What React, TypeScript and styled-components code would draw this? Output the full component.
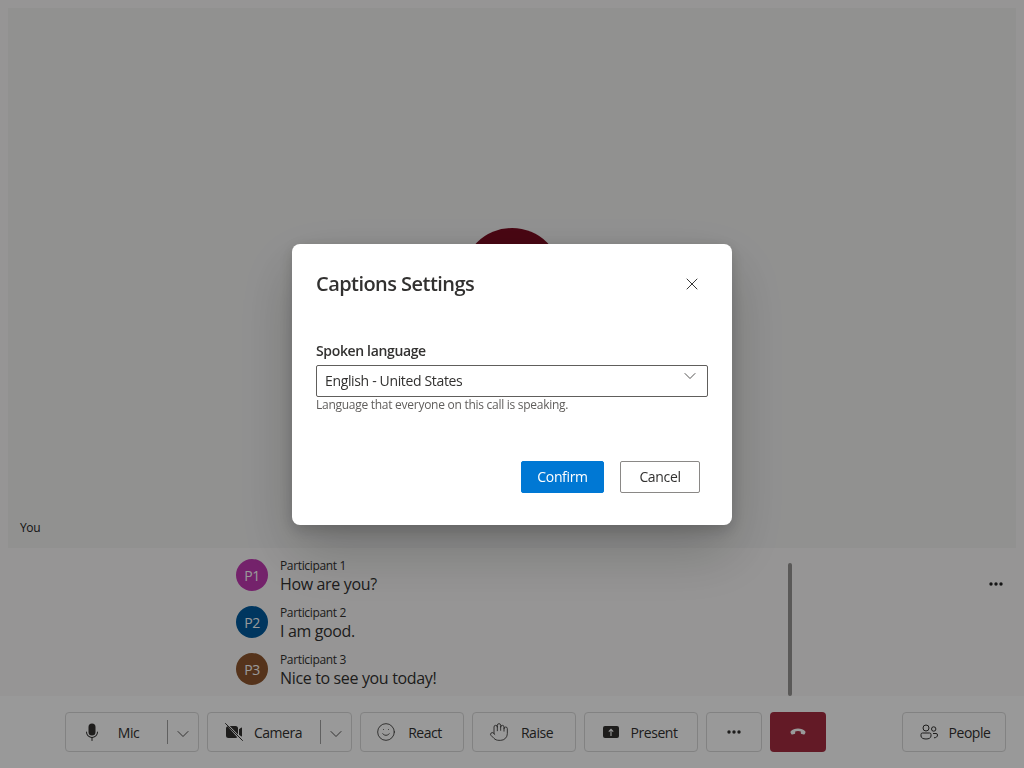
import { ReactNode } from 'react';
import { createGlobalStyle, styled } from 'styled-components';
import { ChevronDown, Hand, Smile, X } from 'lucide-react';

const GlobalStyle = createGlobalStyle`
  html, body {
    margin: 0;
    padding: 0;
    height: 100%;
    background: #fff;
  }

  body, button {
    font-family: "Open Sans", "Noto Sans", sans-serif;
    letter-spacing: -0.35px;
  }

  #root {
    height: 100%;
  }
`;

const MicIcon = () => (
  <svg width="20" height="20" viewBox="0 0 20 20" fill="currentColor">
    <path d="M10 1.500a3.500 3.500 0 0 0-3.500 3.500v5a3.500 3.500 0 0 0 7 0V5A3.500 3.500 0 0 0 10 1.500Z" />
    <path d="M4.500 9.500c.3 0 .5.2.5.5a5 5 0 0 0 10 0c0-.3.2-.5.5-.5s.5.2.5.5a6 6 0 0 1-5.500 6v2.500a.5.5 0 0 1-1 0V16A6 6 0 0 1 4 10c0-.3.2-.5.5-.5Z" />
  </svg>
);

const CameraOffIcon = () => (
  <svg width="20" height="20" viewBox="0 0 20 20" fill="currentColor">
    <path d="M3.600 4.200A2.400 2.400 0 0 0 2 6.500v7A2.500 2.500 0 0 0 4.500 16h7c.7 0 1.300-.3 1.800-.7L3.600 4.200Z" />
    <path d="M14 12.600V6.500A2.500 2.500 0 0 0 11.500 4H5.700L14 12.600Z" />
    <path d="M15 7.200l2.400-1.600c.3-.2.6 0 .6.4v8c0 .4-.3.6-.6.4L15 12.800V7.200Z" />
    <path d="M1.500 1.500l17 17" stroke="currentColor" strokeWidth="1" fill="none" strokeLinecap="round" />
  </svg>
);

const PresentIcon = () => (
  <svg width="16" height="12" viewBox="0 0 16 12">
    <rect width="16" height="12" rx="2" fill="currentColor" />
    <path d="M8 10V3.500M5.800 5.600 8 3.300l2.200 2.300" fill="none" stroke="#fff" strokeWidth="1.100" />
  </svg>
);

const DotsIcon = () => (
  <svg width="14" height="4" viewBox="0 0 14 4" fill="currentColor">
    <circle cx="2" cy="2" r="1.700" />
    <circle cx="7" cy="2" r="1.700" />
    <circle cx="12" cy="2" r="1.700" />
  </svg>
);

const HangUpIcon = () => (
  <svg width="16" height="8" viewBox="0 0 16 8" fill="currentColor">
    <path d="M8 .5c3 0 5.600 1 7 2.400.6.6.6 1.400.3 2l-.5 1c-.3.5-.8.7-1.300.6l-1.700-.4c-.6-.1-1-.6-1-1.200V3.600C10 3.200 9 3 8 3s-2 .2-2.800.6v1.300c0 .6-.4 1.100-1 1.200l-1.700.4c-.5.1-1-.1-1.300-.6l-.5-1c-.3-.6-.3-1.400.3-2C2.400 1.500 5 .5 8 .5Z" />
  </svg>
);

const PeopleIcon = () => (
  <svg width="18" height="16" viewBox="0 0 18 16" fill="none" stroke="currentColor" strokeWidth="1">
    <circle cx="6" cy="4" r="3" />
    <circle cx="13.700" cy="5" r="2.200" />
    <path d="M1 12v-1.500A1.500 1.500 0 0 1 2.500 9h7a1.500 1.500 0 0 1 1.500 1.500V12c0 1.800-2 3-5 3s-5-1.200-5-3Z" />
    <path d="M13 9.500h3a1.500 1.500 0 0 1 1.500 1.500c0 1.800-1.500 2.800-3.500 2.800" />
  </svg>
);

const Page = styled.div`
  height: 100vh;
  display: flex;
  flex-direction: column;
  overflow: hidden;
  background: #faf9f8;
`;

const Stage = styled.div`
  height: 548px;
  padding: 8px 8px 0;
  box-sizing: border-box;
  display: flex;
`;

const VideoTile = styled.div`
  flex: 1;
  position: relative;
  display: flex;
  align-items: center;
  justify-content: center;
  background: #f2f2f1;
`;

const TileAvatar = styled.div`
  width: 100px;
  height: 100px;
  border-radius: 50%;
  background: #7a0b20;
`;

const TileName = styled.span`
  position: absolute;
  left: 12px;
  bottom: 13px;
  font-size: 12px;
  line-height: 14px;
  font-weight: 500;
  color: #242424;
`;

const CaptionsBar = styled.section`
  flex: 1;
  display: flex;
  padding-left: 236px;
  padding-right: 21px;
  overflow: hidden;
`;

const CaptionList = styled.div`
  width: 552px;
  padding-top: 11px;
  display: flex;
  flex-direction: column;
  gap: 11px;
`;

const CaptionRow = styled.div`
  display: flex;
  gap: 12px;
`;

const Avatar = styled.div<{ $bg: string }>`
  width: 32px;
  height: 32px;
  border-radius: 50%;
  background: ${({ $bg }) => $bg};
  color: #fff;
  display: flex;
  align-items: center;
  justify-content: center;
  font-size: 14px;
  font-weight: 500;
`;

const CaptionBody = styled.div`
  display: flex;
  flex-direction: column;
`;

const Speaker = styled.span`
  font-size: 12px;
  line-height: 14px;
  color: #323130;
`;

const CaptionText = styled.span`
  font-size: 16px;
  line-height: 22px;
  color: #323130;
`;

const ScrollThumb = styled.div`
  width: 4px;
  margin-top: 15px;
  border-radius: 2px;
  background: #979593;
`;

const CaptionsMore = styled.div`
  margin-left: auto;
  margin-top: 34px;
  height: 4px;
  display: flex;
  color: #242424;
`;

const Toolbar = styled.footer`
  height: 72px;
  box-sizing: border-box;
  padding: 0 18px 0 65px;
  display: flex;
  align-items: center;
  justify-content: space-between;
  background: #fff;
`;

const ToolGroup = styled.div`
  display: flex;
  gap: 8px;
`;

const ToolButton = styled.button<{ $width: number }>`
  width: ${({ $width }) => $width}px;
  height: 40px;
  box-sizing: border-box;
  padding: 0;
  border: 1px solid #d9d9d9;
  border-radius: 4px;
  background: #fff;
  color: #323130;
  font-size: 14px;
  letter-spacing: -0.45px;
  display: flex;
  align-items: center;
`;

const ButtonFace = styled.span<{ $gap: number; $pad: string }>`
  flex: 1;
  padding: ${({ $pad }) => $pad};
  display: flex;
  align-items: center;
  justify-content: center;
  gap: ${({ $gap }) => $gap}px;
`;

const SplitPart = styled.span`
  width: 31px;
  height: 24px;
  box-sizing: border-box;
  padding-top: 4px;
  border-left: 1px solid #a0a0a0;
  display: flex;
  align-items: center;
  justify-content: center;
`;

const EndCall = styled.button`
  width: 56px;
  height: 40px;
  padding: 0;
  border: 0;
  border-radius: 4px;
  background: #a52c40;
  color: #fff;
  display: flex;
  align-items: center;
  justify-content: center;
`;

const Scrim = styled.div`
  position: fixed;
  inset: 0;
  display: flex;
  align-items: center;
  justify-content: center;
  background: rgba(0, 0, 0, 0.4);
`;

const Dialog = styled.div`
  width: 440px;
  height: 281px;
  box-sizing: border-box;
  padding: 24px 24px 32px;
  border-radius: 8px;
  background: #fff;
  box-shadow: 0 25.6px 57.6px rgba(0, 0, 0, 0.22), 0 4.8px 14.4px rgba(0, 0, 0, 0.18);
  display: flex;
  flex-direction: column;
`;

const DialogHeader = styled.header`
  height: 32px;
  display: flex;
  align-items: center;
  justify-content: space-between;
`;

const DialogTitle = styled.h2`
  margin: 0;
  font-size: 20px;
  line-height: 32px;
  font-weight: 600;
  letter-spacing: -0.55px;
  color: #323130;
`;

const CloseButton = styled.button`
  width: 32px;
  height: 32px;
  padding: 0;
  border: 0;
  background: none;
  color: #242424;
  display: flex;
  align-items: center;
  justify-content: center;
`;

const Field = styled.div`
  margin-top: 41px;
  display: flex;
  flex-direction: column;
`;

const FieldLabel = styled.label`
  font-size: 14px;
  line-height: 20px;
  font-weight: 600;
  color: #323130;
  margin-bottom: 4px;
`;

const SelectBox = styled.div`
  height: 32px;
  box-sizing: border-box;
  padding: 0 7px 0 8px;
  border: 1px solid #605e5c;
  border-radius: 2px;
  display: flex;
  align-items: center;
  justify-content: space-between;
  font-size: 14px;
  color: #323130;

  svg {
    margin-top: -9px;
  }
`;

const FieldHint = styled.span`
  font-size: 12px;
  line-height: 16px;
  letter-spacing: -0.27px;
  color: #605e5c;
`;

const DialogActions = styled.div`
  margin-top: auto;
  padding-right: 8px;
  display: flex;
  justify-content: flex-end;
  gap: 16px;
`;

const DialogButton = styled.button<{ $primary?: boolean }>`
  width: ${({ $primary }) => ($primary ? 83 : 80)}px;
  height: 32px;
  padding: 0;
  border: 1px solid ${({ $primary }) => ($primary ? '#0078d4' : '#8a8886')};
  border-radius: 2px;
  background: ${({ $primary }) => ($primary ? '#0078d4' : '#fff')};
  color: ${({ $primary }) => ($primary ? '#fff' : '#323130')};
  font-size: 14px;
`;

const captions = [
  { initials: 'P1', name: 'Participant 1', text: 'How are you?', color: '#c239b3' },
  { initials: 'P2', name: 'Participant 2', text: 'I am good.', color: '#005b9e' },
  { initials: 'P3', name: 'Participant 3', text: 'Nice to see you today!', color: '#8e562e' },
];

type ToolProps = {
  width: number;
  gap: number;
  icon: ReactNode;
  label?: string;
  split?: boolean;
  pad?: string;
};

const Tool = ({ width, gap, icon, label, split, pad = '0' }: ToolProps) => (
  <ToolButton $width={width}>
    <ButtonFace $gap={gap} $pad={pad}>
      {icon}
      {label && <span>{label}</span>}
    </ButtonFace>
    {split && (
      <SplitPart>
        <ChevronDown size={20} strokeWidth={1} />
      </SplitPart>
    )}
  </ToolButton>
);

const App = () => {
  return (
    <Page>
      <GlobalStyle />
      <Stage>
        <VideoTile>
          <TileAvatar />
          <TileName>You</TileName>
        </VideoTile>
      </Stage>
      <CaptionsBar>
        <CaptionList>
          {captions.map((caption) => (
            <CaptionRow key={caption.initials}>
              <Avatar $bg={caption.color}>{caption.initials}</Avatar>
              <CaptionBody>
                <Speaker>{caption.name}</Speaker>
                <CaptionText>{caption.text}</CaptionText>
              </CaptionBody>
            </CaptionRow>
          ))}
        </CaptionList>
        <ScrollThumb />
        <CaptionsMore>
          <DotsIcon />
        </CaptionsMore>
      </CaptionsBar>
      <Toolbar>
        <ToolGroup>
          <Tool width={134} gap={16} icon={<MicIcon />} label="Mic" split pad="0 12px 0 0" />
          <Tool width={145} gap={10} icon={<CameraOffIcon />} label="Camera" split pad="0 2px 0 0" />
          <Tool width={104} gap={12} icon={<Smile size={20} strokeWidth={1} />} label="React" pad="0 6px 0 0" />
          <Tool width={104} gap={12} icon={<Hand size={20} strokeWidth={1} />} label="Raise" pad="0 6px 0 0" />
          <Tool width={114} gap={12} icon={<PresentIcon />} label="Present" pad="0 2px 0 0" />
          <Tool width={56} gap={0} icon={<DotsIcon />} />
          <EndCall>
            <HangUpIcon />
          </EndCall>
        </ToolGroup>
        <Tool width={104} gap={11} icon={<PeopleIcon />} label="People" pad="0 0 0 2px" />
      </Toolbar>
      <Scrim>
        <Dialog>
          <DialogHeader>
            <DialogTitle>Captions Settings</DialogTitle>
            <CloseButton>
              <X size={20} strokeWidth={1.1} />
            </CloseButton>
          </DialogHeader>
          <Field>
            <FieldLabel>Spoken language</FieldLabel>
            <SelectBox>
              English - United States
              <ChevronDown size={20} strokeWidth={1} />
            </SelectBox>
            <FieldHint>Language that everyone on this call is speaking.</FieldHint>
          </Field>
          <DialogActions>
            <DialogButton $primary>Confirm</DialogButton>
            <DialogButton>Cancel</DialogButton>
          </DialogActions>
        </Dialog>
      </Scrim>
    </Page>
  );
};

export default App;
